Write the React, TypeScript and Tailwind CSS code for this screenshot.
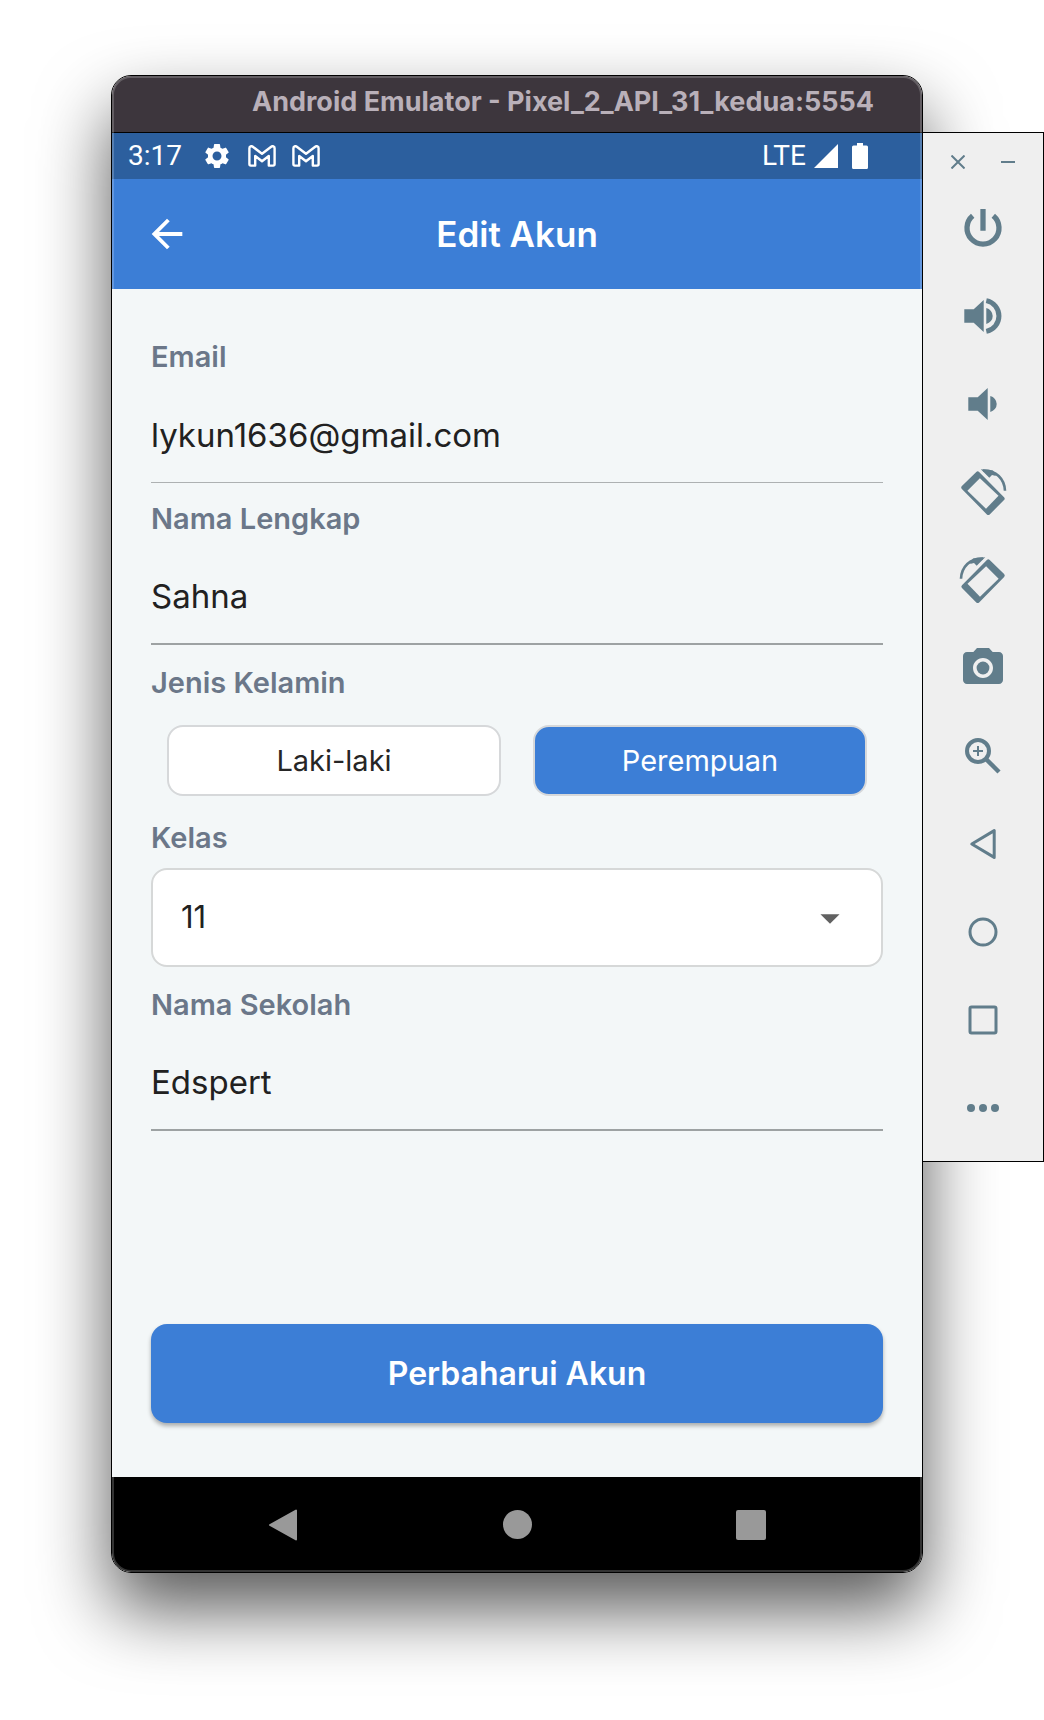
import { useState, type ReactNode } from "react";
import { MdArrowBack, MdArrowDropDown, MdCameraAlt, MdSettings } from "react-icons/md";

function GmailIcon() {
  return (
    <svg className="h-[22px] w-7" viewBox="0 0 28 22" fill="none" stroke="currentColor" strokeWidth="2.4" strokeLinejoin="round" aria-hidden="true">
      <path d="M1.4 3.2C1.4 1.2 3.5 .7 4.8 1.7L14 8.8l9.2-7.1c1.300-1 3.400-.5 3.400 1.500V19c0 1-.6 1.600-1.500 1.600h-4.300V11L14 16.300 7.200 11v9.600H2.900c-.9 0-1.500-.6-1.500-1.600z" />
    </svg>
  );
}

function ToolIcon({ children }: { children: ReactNode }) {
  return (
    <svg className="size-12 overflow-visible" viewBox="0 0 48 48" fill="none" stroke="currentColor" aria-hidden="true">
      {children}
    </svg>
  );
}

const speaker = <path d="M5.3 17.3h9.4L24.7 8v32l-10-9.3H5.3zM27.3 16a8.2 8.2 0 0 1 0 16z" fill="currentColor" stroke="none" />;

const rotated = (
  <>
    <path d="M4.3 19.5 18.7 5.3l24.9 25.4L29.3 45z" fill="currentColor" strokeWidth="4" strokeLinejoin="round" />
    <path d="M8.4 22.8 20.9 10.2 39.5 27.8 27 40.7z" fill="#efefef" stroke="none" />
    <path d="M24 2.5C37 2 45.5 11 46 22.7" strokeWidth="2.6" />
    <path d="M21.8 1.2 34 2.5l3 5.5-4-1-2.7 2.7z" fill="currentColor" stroke="none" />
  </>
);

const tools: { name: string; icon: ReactNode }[] = [
  {
    name: "Power",
    icon: (
      <ToolIcon>
        <path d="M13.7 11.8a16 16 0 1 0 20.6 0M24 5v21.7" strokeWidth="5.3" />
      </ToolIcon>
    ),
  },
  {
    name: "Volume up",
    icon: (
      <ToolIcon>
        {speaker}
        <path d="M27.3 8.6a15.7 15.7 0 0 1 0 30.8" strokeWidth="5" />
      </ToolIcon>
    ),
  },
  {
    name: "Volume down",
    icon: (
      <ToolIcon>
        <g transform="translate(4 0)">{speaker}</g>
      </ToolIcon>
    ),
  },
  { name: "Rotate left", icon: <ToolIcon>{rotated}</ToolIcon> },
  {
    name: "Rotate right",
    icon: (
      <ToolIcon>
        <g transform="matrix(-1 0 0 1 48 0)">{rotated}</g>
      </ToolIcon>
    ),
  },
  { name: "Take screenshot", icon: <MdCameraAlt className="size-12" aria-hidden="true" /> },
  {
    name: "Zoom",
    icon: (
      <ToolIcon>
        <circle cx="19" cy="19" r="11" strokeWidth="4" />
        <path d="m27.5 27.5 12.5 12.5" strokeWidth="4.4" />
        <path d="M19 14v10M14 19h10" strokeWidth="2" />
      </ToolIcon>
    ),
  },
  {
    name: "Back",
    icon: (
      <ToolIcon>
        <path d="M12.8 24 35.2 10.6v26.8z" strokeWidth="3" strokeLinejoin="round" />
      </ToolIcon>
    ),
  },
  {
    name: "Home",
    icon: (
      <ToolIcon>
        <circle cx="24" cy="24" r="13" strokeWidth="3" />
      </ToolIcon>
    ),
  },
  {
    name: "Overview",
    icon: (
      <ToolIcon>
        <rect x="11" y="11" width="26" height="26" rx="1.5" strokeWidth="3" />
      </ToolIcon>
    ),
  },
  {
    name: "More",
    icon: (
      <ToolIcon>
        <g fill="currentColor" stroke="none">
          <circle cx="12" cy="24" r="4" />
          <circle cx="24" cy="24" r="4" />
          <circle cx="36" cy="24" r="4" />
        </g>
      </ToolIcon>
    ),
  },
];

const labelStyle = "block text-[29px] leading-10 font-semibold text-[#6b7789]";

function TextField({ id, label, value, type = "text", line }: { id: string; label: string; value: string; type?: string; line: string }) {
  return (
    <div>
      <label htmlFor={id} className={labelStyle}>
        {label}
      </label>
      <input
        id={id}
        type={type}
        defaultValue={value}
        className={`block h-[106px] w-full bg-transparent pt-2.5 text-[33px] text-[#212121] outline-none ${line}`}
      />
    </div>
  );
}

function StatusBar() {
  return (
    <div className="flex h-[46px] items-center bg-[#2c5f9e] pr-[54px] pl-4 font-[Roboto,sans-serif] text-[28px] leading-none text-white">
      <span>3:17</span>
      <MdSettings className="ml-5 size-[30px]" aria-hidden="true" />
      <div className="ml-4 flex gap-4">
        <GmailIcon />
        <GmailIcon />
      </div>
      <span className="ml-auto">LTE</span>
      <svg className="ml-2 size-6" viewBox="0 0 24 24" fill="currentColor" aria-hidden="true">
        <path d="M24 0v24H0z" />
      </svg>
      <svg className="ml-3.5 h-[26px] w-4" viewBox="0 0 16 26" fill="currentColor" aria-hidden="true">
        <path d="M5 0h6v2.5h3.5A1.5 1.5 0 0 1 16 4v20.5a1.5 1.5 0 0 1-1.5 1.5h-13A1.5 1.5 0 0 1 0 24.5V4a1.5 1.5 0 0 1 1.5-1.5H5z" />
      </svg>
    </div>
  );
}

function GenderPicker() {
  const [gender, setGender] = useState("Perempuan");
  return (
    <fieldset className="mt-[18px]">
      <legend className={labelStyle}>Jenis Kelamin</legend>
      <div className="mt-[22px] grid grid-cols-2 gap-8 px-4">
        {["Laki-laki", "Perempuan"].map((option) => (
          <label
            key={option}
            className="relative flex h-[71px] cursor-pointer items-center justify-center rounded-2xl border-2 border-[#d6d8da] bg-white text-[29px] text-[#262626] has-checked:bg-[#3c7ed6] has-checked:text-white"
          >
            <input type="radio" name="gender" value={option} checked={gender === option} onChange={() => setGender(option)} className="sr-only" />
            {option}
          </label>
        ))}
      </div>
    </fieldset>
  );
}

function EditForm() {
  return (
    <form className="bg-[#f3f7f8] px-[39px] pt-12 pb-[54px]" onSubmit={(event) => event.preventDefault()}>
      <TextField id="email" label="Email" type="email" value="lykun1636@gmail.com" line="border-b border-[#adb1b2]" />
      <div className="mt-4">
        <TextField id="name" label="Nama Lengkap" value="Sahna" line="border-b-2 border-[#9da2a3]" />
      </div>
      <GenderPicker />
      <div className="mt-[22px]">
        <label htmlFor="grade" className={labelStyle}>
          Kelas
        </label>
        <div className="relative mt-2.5">
          <select id="grade" defaultValue="11" className="block h-[99px] w-full appearance-none rounded-2xl border-2 border-[#d6d8d8] bg-white px-7 text-[31px] text-[#212121] outline-none">
            <option>10</option>
            <option>11</option>
            <option>12</option>
          </select>
          <MdArrowDropDown className="pointer-events-none absolute inset-y-0 right-[30px] my-auto size-[46px] text-[#616161]" aria-hidden="true" />
        </div>
      </div>
      <div className="mt-[18px]">
        <TextField id="school" label="Nama Sekolah" value="Edspert" line="border-b-2 border-[#9da2a3]" />
      </div>
      <button type="submit" className="mt-[193px] block h-[99px] w-full rounded-2xl bg-[#3c7ed6] text-[32px] font-semibold text-white shadow-[0_3px_4px_rgba(0,0,0,0.3)]">
        Perbaharui Akun
      </button>
    </form>
  );
}

function NavigationBar() {
  return (
    <nav className="grid h-[95px] grid-cols-3 bg-black px-[54px] text-[#999999]">
      <button type="button" aria-label="Back" className="grid place-items-center">
        <svg className="size-8" viewBox="0 0 32 32" fill="currentColor" stroke="currentColor" strokeWidth="2" strokeLinejoin="round" aria-hidden="true">
          <path d="M3 16 29 1.5v29z" />
        </svg>
      </button>
      <button type="button" aria-label="Home" className="grid place-items-center">
        <span className="size-[29px] rounded-full bg-current" />
      </button>
      <button type="button" aria-label="Overview" className="grid place-items-center">
        <span className="size-[30px] rounded-xs bg-current" />
      </button>
    </nav>
  );
}

export default function App() {
  return (
    <div className="flex items-start overflow-hidden bg-white pt-[75px] pb-[147px] pl-[111px] font-[Inter,sans-serif]">
      <main className="relative min-w-0 flex-1 rounded-[20px] shadow-[0_36px_72px_rgba(0,0,0,0.66)]">
        <div className="overflow-hidden rounded-[20px] border border-black">
          <h1 className="flex h-[57px] items-center justify-end border-b border-black bg-[#3d363d] pr-12 pb-1 text-[27px] font-bold whitespace-nowrap text-[#b9b0b9]">
            Android Emulator - Pixel_2_API_31_kedua:5554
          </h1>
          <StatusBar />
          <header className="grid h-[110px] grid-cols-[1fr_auto_1fr] items-center bg-[#3c7ed6] px-8 text-white">
            <button type="button" aria-label="Kembali" className="justify-self-start">
              <MdArrowBack className="size-[46px]" aria-hidden="true" />
            </button>
            <h2 className="text-[35px] font-semibold">Edit Akun</h2>
          </header>
          <EditForm />
          <NavigationBar />
        </div>
        <div className="pointer-events-none absolute inset-px rounded-[19px] border-2 border-white/20" />
      </main>
      <aside className="relative mt-[57px] w-[121px] shrink-0 border border-l-0 border-black bg-[#efefef] pb-[9px] text-[#617d8b]">
        <div className="flex h-[51px] items-center justify-center gap-9 pt-1.5">
          <button type="button" aria-label="Close">
            <svg className="size-3.5" viewBox="0 0 14 14" stroke="currentColor" strokeWidth="2" aria-hidden="true">
              <path d="m.5.5 13 13m0-13-13 13" />
            </svg>
          </button>
          <button type="button" aria-label="Minimize">
            <svg className="size-3.5" viewBox="0 0 14 14" stroke="currentColor" strokeWidth="2" aria-hidden="true">
              <path d="M0 7h14" />
            </svg>
          </button>
        </div>
        {tools.map((tool) => (
          <button key={tool.name} type="button" aria-label={tool.name} className="grid h-22 w-full place-items-center">
            {tool.icon}
          </button>
        ))}
      </aside>
    </div>
  );
}
